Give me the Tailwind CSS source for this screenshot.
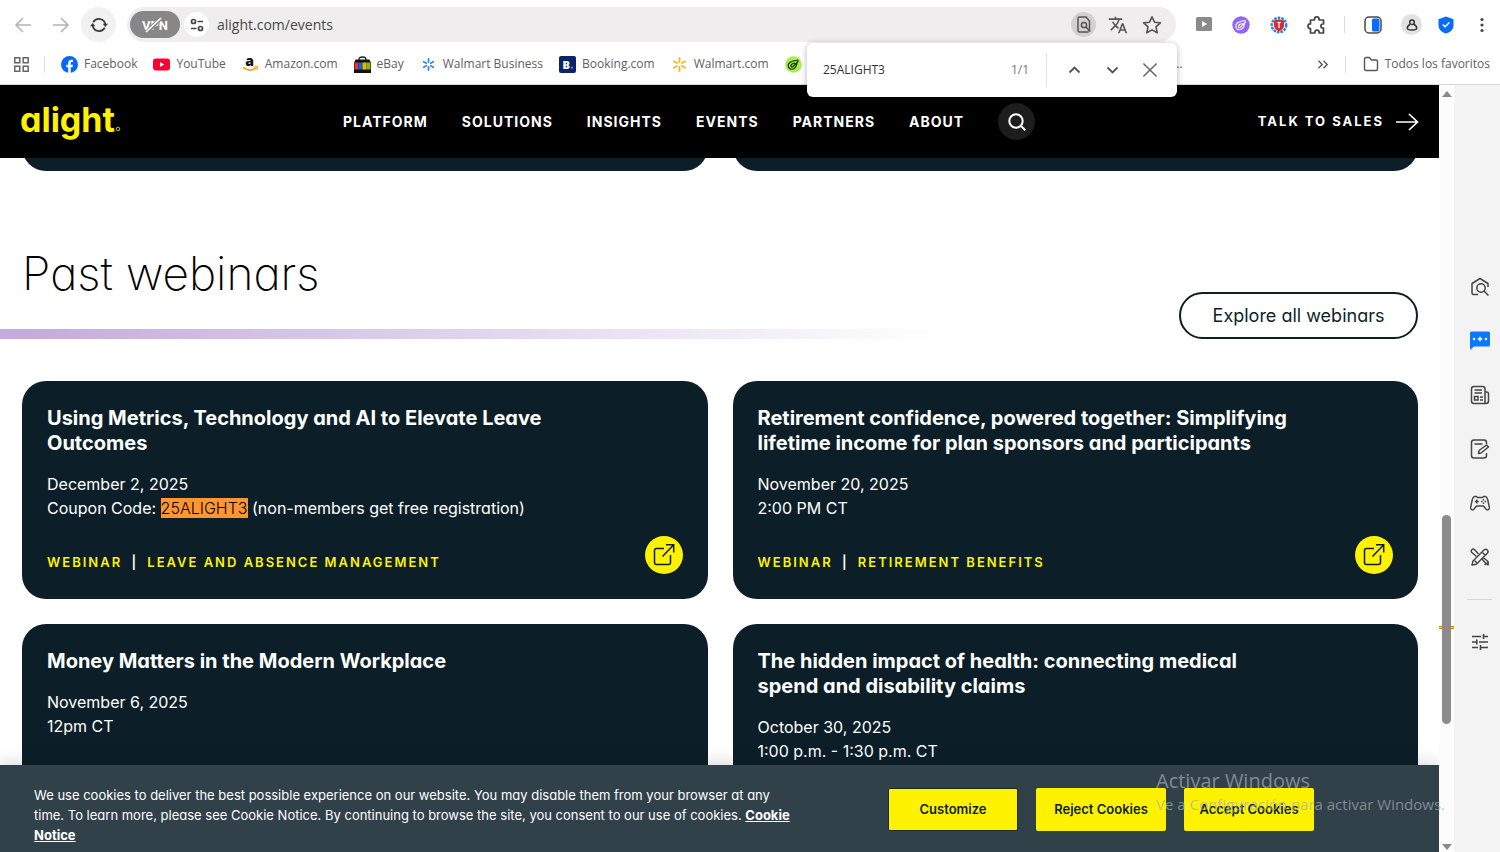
<!DOCTYPE html>
<html lang="en">
<head>
<meta charset="utf-8">
<meta name="viewport" content="width=device-width, initial-scale=1">
<title>Events | Alight</title>
<script src="https://cdn.jsdelivr.net/npm/@tailwindcss/browser@4"></script>
</head>
<body class="flex h-screen flex-col overflow-hidden bg-white font-['Open_Sans','Noto_Sans',sans-serif] text-[#5f6062]">

<!-- Browser chrome -->
<header class="relative z-30 shrink-0 border-b border-[#d9d9d9] bg-white">
  <div class="flex h-[49px] items-center">
    <div class="flex w-[127px] shrink-0 items-center pl-[14px]">
      <button aria-label="Back" class="mr-5 text-[#b4b4b4]"><svg class="size-[18px]" viewBox="0 0 18 18" fill="none" stroke="currentColor" stroke-width="1.6"><path d="M17 9H2M9 2 2 9l7 7"/></svg></button>
      <button aria-label="Forward" class="mr-[11px] text-[#b4b4b4]"><svg class="size-[18px]" viewBox="0 0 18 18" fill="none" stroke="currentColor" stroke-width="1.6"><path d="M1 9h15M9 2l7 7-7 7"/></svg></button>
      <button aria-label="Reload" class="flex size-[35px] items-center justify-center rounded-full bg-[#f1f1f1] text-[#3c3c3c]"><svg class="size-[18px]" viewBox="0 0 18 18" fill="none" stroke="currentColor" stroke-width="1.7"><path d="M3.200 6.200A6.600 6.600 0 0 1 15.400 8.500M14.800 11.800A6.600 6.600 0 0 1 2.600 9.500"/><path d="M12.600 7.800h5.400L15.300 11zM0 10.200h5.400L2.700 7z" fill="currentColor" stroke="none"/></svg></button>
    </div>
    <div class="flex h-[35px] flex-1 items-center rounded-full bg-[#efedee] pr-3 pl-[3px]">
      <button aria-label="VPN is off" class="flex h-[27px] w-[50px] items-center justify-center rounded-full bg-[#878787] text-white">
        <svg class="h-[18px] w-[28px] overflow-visible" viewBox="0 0 28 18"><text x="14" y="14" text-anchor="middle" font-family="Roboto" font-size="13" font-weight="700" fill="#fff">VPN</text><path d="M5 17 20 2" stroke="#878787" stroke-width="4"/><path d="M5 16 20 2" stroke="#fff" stroke-width="1.700"/></svg>
      </button>
      <button aria-label="Site information" class="ml-1 flex size-[25px] items-center justify-center rounded-full bg-white text-[#444]"><svg class="size-[14px]" viewBox="0 0 14 14" fill="none" stroke="currentColor" stroke-width="1.700"><circle cx="3.500" cy="3.500" r="2"/><path d="M7.500 3.500H13M1 10.500h5.500"/><circle cx="10.500" cy="10.500" r="2"/></svg></button>
      <input aria-label="Address" value="alight.com/events" class="ml-2 min-w-0 flex-1 text-sm text-[#484848] outline-none">
      <div class="flex items-center gap-[9px]">
        <button aria-label="Find in page" class="flex size-[25px] items-center justify-center rounded-full bg-[#d2d0d1] text-[#555]"><svg class="h-[17px] w-[14px]" viewBox="0 0 14 17" fill="none" stroke="currentColor" stroke-width="1.500"><path d="M12.500 15.500V5L9 1H2.500Q1 1 1 2.500v12Q1 16 2.500 16h9"/><circle cx="7" cy="9" r="2.600"/><path d="m9 11 4 4.500"/></svg></button>
        <button aria-label="Translate" class="flex size-[25px] items-center justify-center text-[#555]"><svg class="size-5" viewBox="0 0 24 24" fill="currentColor"><path d="m12.870 15.070-2.540-2.510.030-.030A17.520 17.520 0 0 0 14.070 6H17V4h-7V2H8v2H1v2h11.170C11.500 7.920 10.440 9.750 9 11.350 8.070 10.320 7.300 9.190 6.690 8h-2c.73 1.630 1.730 3.170 2.980 4.560l-5.090 5.020L4 19l5-5 3.110 3.110zM18.500 10h-2L12 22h2l1.120-3h4.750L21 22h2zm-2.620 7 1.620-4.330L19.120 17z"/></svg></button>
        <button aria-label="Bookmark this page" class="flex size-[25px] items-center justify-center text-[#555]"><svg class="size-5" viewBox="0 0 20 20" fill="none" stroke="currentColor" stroke-width="1.600" stroke-linejoin="round"><path d="m10 1.800 2.500 5.400 5.900.700-4.400 4 1.200 5.900-5.200-2.900-5.200 2.900L6 11.900l-4.400-4 5.900-.7z"/></svg></button>
      </div>
    </div>
    <div class="flex w-[324px] shrink-0 items-center pl-[19px]">
      <button aria-label="Video" class="mr-[19px]"><svg class="h-[15px] w-[18px]" viewBox="0 0 18 15"><rect x="1" width="16" height="14" rx="1.500" fill="#8b8b8b"/><path d="m7 4 5 3-5 3z" fill="#fff"/></svg></button>
      <button aria-label="Coupons" class="mr-5"><svg class="size-[18px]" viewBox="0 0 18 18" fill="none"><circle cx="9" cy="9" r="8.700" fill="#9266f5"/><path d="M14 5.500 9.500 9.800M13.500 4.500Q9 5 6 6.500 3 8.500 4 11.500t4.500 2Q12 12.500 12.500 7M10.500 7.500Q7 8 6.500 10t2 1.200L10 9.500" stroke="#fff" stroke-width="1.100"/></svg></button>
      <button aria-label="Ad shield" class="mr-[19px]"><svg class="size-[18px]" viewBox="0 0 18 18"><circle cx="9" cy="9" r="7.200" fill="none" stroke="#2c83d3" stroke-width="2.500" stroke-dasharray="2.600 1"/><path d="M9 3.200 14 4.500v5c0 3-2.500 4.700-5 6-2.500-1.300-5-3-5-6v-5z" fill="#d82b35"/><path d="M7 6.500h4M9 6.500V12" stroke="#fff" stroke-width="1.200"/></svg></button>
      <button aria-label="Extensions" class="mr-[17px] text-[#444]"><svg class="size-5" viewBox="0 0 20 20" fill="none" stroke="currentColor" stroke-width="1.700" stroke-linejoin="round"><path d="M3.500 5h4V4.200a2.300 2.300 0 0 1 4.600 0V5h4.400v4h-.6a2 2 0 0 0 0 4h.6v5h-4.400v-.700a2.100 2.100 0 0 0-4.200 0v.7H3.500v-4.500h-.2a2.300 2.300 0 0 1 0-4.600h.2z"/></svg></button>
      <span class="mr-[19px] h-[17px] w-px bg-[#dedede]"></span>
      <button aria-label="Side panel" class="mr-[19px]"><svg class="size-[18px]" viewBox="0 0 18 18"><rect x="1" y="1" width="16" height="16" rx="4" fill="#fff" stroke="#4a4a4a" stroke-width="1.500"/><rect x="8" y="2.500" width="7.500" height="13" rx="1.500" fill="#0a6cff"/></svg></button>
      <button aria-label="Profile" class="mr-4 flex size-[21px] items-center justify-center rounded-full bg-[#e2e2e2]"><svg class="size-3" viewBox="0 0 12 12" fill="none" stroke="#333" stroke-width="1.500"><circle cx="6" cy="3.200" r="2.300"/><path d="M4 5.500C2 6.500 1.300 8 1.300 9.300q0 1.700 4.700 1.700t4.700-1.700C10.700 8 10 6.500 8 5.500"/></svg></button>
      <button aria-label="Protection" class="mr-[19px]"><svg class="h-[18px] w-4" viewBox="0 0 16 18"><path d="m8 .500 7.500 2.700v6C15.500 13.500 12.500 16 8 17.500 3.500 16 .5 13.500.5 9.200v-6z" fill="#0a6cf5"/><path d="m4.800 8.500 2.300 2.300 4.300-4.300" stroke="#fff" stroke-width="1.500" fill="none"/></svg></button>
      <button aria-label="Menu"><svg class="h-4 w-[18px]" viewBox="0 0 18 16" fill="#444"><circle cx="9" cy="2.500" r="1.600"/><circle cx="9" cy="8" r="1.600"/><circle cx="9" cy="13.500" r="1.600"/></svg></button>
    </div>
  </div>

  <nav aria-label="Bookmarks" class="flex h-[35px] items-start pt-[6px] pr-[10px] pl-[14px] text-xs leading-[18px]">
    <div class="flex h-[18px] flex-1 items-center">
      <button aria-label="Apps" class="mr-[15px] text-[#666]"><svg class="size-[15px]" viewBox="0 0 15 15" fill="none" stroke="currentColor" stroke-width="1.500"><path d="M.8.8h5v5h-5zM9.200.8h5v5h-5zM.8 9.200h5v5h-5zM9.200 9.200h5v5h-5z"/></svg></button>
      <span class="mr-4 h-[17px] w-px bg-[#dedede]"></span>
      <div class="flex items-center gap-4 whitespace-nowrap">
        <a href="#" class="flex items-center gap-[6px]"><svg class="size-[17px]" viewBox="0 0 17 17"><circle cx="8.500" cy="8.500" r="8.500" fill="#0866ff"/><path d="M7.200 17v-5.800H5.300V8.700h1.900V7.400c0-2.600 1.200-3.700 3.400-3.700l1.300.1v2.300h-.9c-1 0-1.300.500-1.300 1.300v1.300h2.200l-.4 2.500H9.700V17z" fill="#fff"/></svg>Facebook</a>
        <a href="#" class="flex items-center gap-[6px]"><svg class="size-[17px]" viewBox="0 0 17 17"><rect y="2.500" width="17" height="12" rx="3" fill="#f03"/><path d="m7 6 4.200 2.500L7 11z" fill="#fff"/></svg>YouTube</a>
        <a href="#" class="flex items-center gap-[6px]"><svg class="size-[17px] overflow-visible" viewBox="0 0 17 17"><text x="7.500" y="10" text-anchor="middle" font-family="Open Sans" font-size="14" font-weight="800" fill="#111">a</text><path d="M1 11.500q7 5 13 .500" stroke="#f5a623" stroke-width="1.700" fill="none"/><path d="m12 11 3.500-.5-.6 3.500" stroke="#f5a623" stroke-width="1.200" fill="none"/></svg>Amazon.com</a>
        <a href="#" class="flex items-center gap-[6px]"><svg class="size-[17px]" viewBox="0 0 17 17"><path d="M5 5V3.500Q5 1 8.500 1T12 3.500V5" stroke="#222" stroke-width="1.300" fill="none"/><path d="M1.500 3.500h14L17 7v10H0V7z" fill="#111"/><path d="M.5 6.500h4v7h-4z" fill="#e53238"/><path d="M4.500 6.500h4v7h-4z" fill="#0a64d2"/><path d="M8.500 6.500h4v7h-4z" fill="#f5af02"/><path d="M12.500 6.500h4v7h-4z" fill="#86b817"/></svg>eBay</a>
        <a href="#" class="flex items-center gap-[6px]"><svg class="size-[17px]" viewBox="0 0 17 17" stroke="#2b8ce6" stroke-width="1.800" stroke-linecap="round"><path d="M8.500 3v3M8.500 11v3M3.700 5.700l2.600 1.500M10.700 9.800l2.600 1.500M13.300 5.700l-2.600 1.500M6.300 9.800l-2.600 1.500"/></svg>Walmart Business</a>
        <a href="#" class="flex items-center gap-[6px]"><svg class="size-[17px]" viewBox="0 0 17 17"><rect width="17" height="17" rx="2" fill="#0a2467"/><text x="3.500" y="12.500" font-family="Open Sans" font-size="11" font-weight="800" fill="#fff">B</text><circle cx="13" cy="11.700" r="1.100" fill="#29a7f5"/></svg>Booking.com</a>
        <a href="#" class="flex items-center gap-[6px]"><svg class="size-[17px]" viewBox="0 0 17 17" stroke="#fbb82d" stroke-width="1.900" stroke-linecap="round"><path d="M8.500 2v4M8.500 11v4M3 5.300l3 1.700M11 10l3 1.700M14 5.300 11 7M6 10l-3 1.700"/></svg>Walmart.com</a>
        <a href="#" aria-label="Coupons" class="flex"><svg class="size-[17px]" viewBox="0 0 17 17" fill="none"><circle cx="8.500" cy="8.500" r="8.300" fill="#a2f04a"/><path d="M13.500 5 9 9.500M13.500 4Q9 4.500 5.500 6 2.500 8 3.500 11T8 13Q11.500 12 12 6.500M10 7Q6.500 7.500 6 9.500t2 1.200L9.500 9" stroke="#1c2b12" stroke-width="1.200"/></svg></a>
      </div>
    </div>
    <div class="flex h-[18px] items-center whitespace-nowrap">
      <span class="mr-[134px]">..</span>
      <button aria-label="More bookmarks" class="mr-4"><svg class="h-[9px] w-3" viewBox="0 0 12 9" fill="none" stroke="#555" stroke-width="1.400"><path d="m1.500.8 3.700 3.700-3.700 3.700M6.500.8l3.700 3.700-3.700 3.700"/></svg></button>
      <span class="mr-[17px] h-[17px] w-px bg-[#dedede]"></span>
      <button class="flex items-center gap-[6px]"><svg class="size-4" viewBox="0 0 16 16" fill="none" stroke="#555" stroke-width="1.400" stroke-linejoin="round"><path d="M1.500 3Q1.500 1.500 3 1.500h3.300L8.500 4H13q1.500 0 1.500 1.500v7.500q0 1.500-1.500 1.500H3Q1.500 14.500 1.500 13z"/></svg>Todos los favoritos</button>
    </div>
  </nav>

  <!-- Find-in-page popup -->
  <div role="search" class="absolute top-[43px] right-[323px] flex h-[54px] w-[370px] items-center rounded-md bg-white pr-[19px] pl-4 shadow-[0_1px_6px_rgba(0,0,0,0.300)]">
    <input aria-label="Find in page" value="25ALIGHT3" class="min-w-0 flex-1 text-xs font-medium text-[#333] outline-none">
    <span class="text-xs text-[#777]">1/1</span>
    <span class="mr-[21px] ml-[17px] h-[34px] w-px bg-[#e2e2e2]"></span>
    <button aria-label="Previous match" class="mr-[25px]"><svg class="h-3 w-[13px]" viewBox="0 0 13 12" fill="none" stroke="#555" stroke-width="1.800"><path d="m1.500 8.500 5-5 5 5"/></svg></button>
    <button aria-label="Next match" class="mr-[23px]"><svg class="h-3 w-[13px]" viewBox="0 0 13 12" fill="none" stroke="#555" stroke-width="1.800"><path d="m1.500 3.500 5 5 5-5"/></svg></button>
    <button aria-label="Close find bar"><svg class="size-4" viewBox="0 0 17 17" fill="none" stroke="#666" stroke-width="1.600"><path d="m1.500 1.500 14 14m0-14-14 14"/></svg></button>
  </div>
</header>

<div class="flex min-h-0 flex-1">
  <!-- Web page -->
  <div class="relative min-w-0 flex-1 overflow-hidden bg-white font-[Inter,Lato,sans-serif] [font-feature-settings:'cv11']">
    <nav aria-label="Main" class="flex h-[73px] items-center bg-black pr-5 pl-[21px] text-sm font-bold tracking-[1px] text-white">
      <a href="#" aria-label="alight home" class="w-[322px] shrink-0 tracking-normal text-[#fff200]">
        <svg class="h-[44px] w-[100px] overflow-visible" viewBox="0 0 100 44"><text x="-1" y="32" font-family="Inter" font-size="34" font-weight="700" fill="#fff200">alight</text><circle cx="97" cy="29" r="1.800" fill="none" stroke="#fff200" stroke-width="0.800"/></svg>
      </a>
      <div class="flex flex-1 items-center gap-[34px]">
        <a href="#">PLATFORM</a><a href="#">SOLUTIONS</a><a href="#">INSIGHTS</a><a href="#">EVENTS</a><a href="#">PARTNERS</a><a href="#">ABOUT</a>
        <button aria-label="Search" class="flex size-[37px] items-center justify-center rounded-full bg-[#1d1d1d]"><svg class="size-[18px]" viewBox="0 0 18 18" fill="none" stroke="#fff" stroke-width="2"><circle cx="8" cy="8" r="6.700"/><path d="m12.800 12.800 4.400 4.400"/></svg></button>
      </div>
      <a href="#" class="flex items-center gap-[11px] text-[13px] tracking-[2px]">TALK TO SALES<svg class="h-[18px] w-6" viewBox="0 0 24 18" fill="none" stroke="#fff" stroke-width="1.700"><path d="M1 9h21.500M14 1l8.500 8-8.500 8"/></svg></a>
    </nav>

    <div class="grid h-[13px] grid-cols-2 content-end gap-[25px] overflow-hidden pr-[21px] pl-[22px]">
      <div class="h-12 rounded-3xl bg-[#0c1f28]"></div>
      <div class="h-12 rounded-3xl bg-[#0c1f28]"></div>
    </div>

    <main>
      <div class="mb-[42px] flex items-end pt-[72px]">
        <div class="flex-1">
          <h1 class="mb-[26px] pl-[22px] text-[46px] leading-[60px] font-extralight text-black">Past webinars</h1>
          <div class="h-[10px] w-4/5 bg-linear-to-r from-[#c4a9dc] to-white"></div>
        </div>
        <a href="#" class="mr-[21px] flex h-[47px] w-[239px] items-center justify-center rounded-full border-2 border-[#0c1f28] text-lg font-normal text-[#0c1f28]">Explore all webinars</a>
      </div>

      <div class="grid grid-cols-2 gap-[25px] pr-[21px] pl-[22px] text-base leading-6 text-white">
        <article class="flex flex-col rounded-3xl bg-[#0c1f28] p-[25px]">
          <h2 class="max-w-[540px] text-xl leading-[25px] font-bold">Using Metrics, Technology and AI to Elevate Leave Outcomes</h2>
          <p class="mt-4">December 2, 2025<br>Coupon Code: <mark class="bg-[#ff9632] font-light text-black">25ALIGHT3</mark> (non-members get free registration)</p>
          <div class="mt-4 flex items-end justify-between">
            <p class="text-[13px] leading-6 font-semibold tracking-[2px] text-[#fff200]">WEBINAR <span class="mx-1 text-white">|</span> LEAVE AND ABSENCE MANAGEMENT</p>
            <a href="#" aria-label="Open webinar" class="flex size-[38px] items-center justify-center rounded-full bg-[#fff200]"><svg class="size-6" viewBox="0 0 24 24" fill="none" stroke="#0c1f28" stroke-width="1.500"><path d="M12 5.500H4.500Q2.500 5.500 2.500 7.500v12q0 2 2 2h12q2 0 2-2V12M10.500 13.500 21.500 2M14 1.800h7.700v7.700"/></svg></a>
          </div>
        </article>
        <article class="flex flex-col rounded-3xl bg-[#0c1f28] p-[25px]">
          <h2 class="max-w-[540px] text-xl leading-[25px] font-bold">Retirement confidence, powered together: Simplifying lifetime income for plan sponsors and participants</h2>
          <p class="mt-4">November 20, 2025<br>2:00 PM CT</p>
          <div class="mt-4 flex items-end justify-between">
            <p class="text-[13px] leading-6 font-semibold tracking-[2px] text-[#fff200]">WEBINAR <span class="mx-1 text-white">|</span> RETIREMENT BENEFITS</p>
            <a href="#" aria-label="Open webinar" class="flex size-[38px] items-center justify-center rounded-full bg-[#fff200]"><svg class="size-6" viewBox="0 0 24 24" fill="none" stroke="#0c1f28" stroke-width="1.500"><path d="M12 5.500H4.500Q2.500 5.500 2.500 7.500v12q0 2 2 2h12q2 0 2-2V12M10.500 13.500 21.500 2M14 1.800h7.700v7.700"/></svg></a>
          </div>
        </article>
        <article class="flex min-h-[218px] flex-col rounded-3xl bg-[#0c1f28] p-[25px]">
          <h2 class="max-w-[540px] text-xl leading-[25px] font-bold">Money Matters in the Modern Workplace</h2>
          <p class="mt-4">November 6, 2025<br>12pm CT</p>
        </article>
        <article class="flex min-h-[218px] flex-col rounded-3xl bg-[#0c1f28] p-[25px]">
          <h2 class="max-w-[540px] text-xl leading-[25px] font-bold">The hidden impact of health: connecting medical spend and disability claims</h2>
          <p class="mt-4">October 30, 2025<br>1:00 p.m. - 1:30 p.m. CT</p>
        </article>
      </div>
    </main>

    <!-- Cookie banner fixed over the page -->
    <section aria-label="Cookie consent" class="absolute inset-x-0 bottom-0 flex h-[87px] items-start bg-[#31414a] pl-[34px] shadow-[0_0_18px_rgba(0,0,0,0.200)]">
      <p class="w-[762px] shrink-0 pt-5 text-[13px] leading-5 font-normal text-white">We use cookies to deliver the best possible experience on our website. You may disable them from your browser at any time. To learn more, please see Cookie Notice. By continuing to browse the site, you consent to our use of cookies. <a href="#" class="font-bold underline">Cookie Notice</a></p>
      <div class="ml-[92px] flex gap-[18px] pt-[23px] text-[13px] font-semibold text-[#0c1f28]">
        <button class="h-[43px] w-[130px] rounded-xs border border-[#1d2b22] bg-[#fff200]">Customize</button>
        <button class="h-[43px] w-[130px] rounded-xs bg-[#fff200]">Reject Cookies</button>
        <button class="h-[43px] w-[130px] rounded-xs bg-[#fff200]">Accept Cookies</button>
      </div>
    </section>
  </div>

  <!-- Scrollbar -->
  <div class="relative flex w-[15px] shrink-0 flex-col items-center justify-between bg-[#fcfcfc] pt-[6px] pb-[2px]">
    <svg class="h-[6px] w-[10px]" viewBox="0 0 10 6"><path d="m0 6 5-6 5 6z" fill="#8b8b8b"/></svg>
    <div class="absolute top-[70%] mt-1 h-[3px] w-full border-y border-[#c98c00] bg-[#ffc933]"></div>
    <div class="absolute top-[56%] h-[209px] w-[9px] rounded-full bg-[#8b8b8b]"></div>
    <svg class="h-[6px] w-[10px]" viewBox="0 0 10 6"><path d="m0 0 5 6 5-6z" fill="#8b8b8b"/></svg>
  </div>

  <!-- Browser side panel -->
  <aside class="flex w-[46px] shrink-0 flex-col items-center gap-[34px] bg-[#f3f3f3] pt-[192px] pl-[5px] text-[#444]">
    <button aria-label="Visual search"><svg class="size-5" viewBox="0 0 20 20" fill="none" stroke="currentColor" stroke-width="1.500" stroke-linejoin="round"><path d="M8 17.500H3.500Q2 17.500 2 16V6.500l8-5 8 5V10"/><circle cx="11" cy="11" r="4.200"/><path d="m14 14 4.500 4.500"/></svg></button>
    <button aria-label="Chat"><svg class="size-5" viewBox="0 0 20 20"><path d="M1.500.5h17q1.500 0 1.500 1.500v12q0 1.500-1.500 1.500H4L0 19V2Q0 .5 1.500.5z" fill="#0a78fa"/><circle cx="4" cy="8" r="1.200" fill="#fff"/><circle cx="16" cy="8" r="1.200" fill="#fff"/><path d="m10 5 .9 2.100L13 8l-2.100.9L10 11l-.9-2.100L7 8l2.100-.9z" fill="#fff"/></svg></button>
    <button aria-label="News"><svg class="size-5" viewBox="0 0 20 20" fill="none" stroke="currentColor" stroke-width="1.500"><path d="M15 18.500H4Q1.500 18.500 1.500 16V4Q1.500 1.500 4 1.500h8.500Q15 1.500 15 4zM15 7h1.500q2 0 2 2v7q0 2.500-2.500 2.500h-1.500M4.500 5h7.500M4.500 8h7.500M4.500 11.500H8V15H4.500zM10 12h3M10 15h3"/></svg></button>
    <button aria-label="Notes"><svg class="size-5" viewBox="0 0 20 20" fill="none" stroke="currentColor" stroke-width="1.500" stroke-linejoin="round"><path d="M16.500 5V3.500q0-2.500-2.500-2.500H4Q1.500 1 1.500 3.500v13Q1.500 19 4 19h10q2.500 0 2.500-2.500V14M4.500 5h8M8.500 14.500l.5-3 7.500-5.500 2 2-7.500 6z"/></svg></button>
    <button aria-label="Games"><svg class="size-5" viewBox="0 0 20 20" fill="none" stroke="currentColor" stroke-width="1.400" stroke-linejoin="round"><path d="M4.500 3.500h2l1 1h5l1-1h2q1.500.5 2.200 3L19.300 14q.2 3-1.800 3-1 0-2-1.500L13.500 13h-7l-2 2.500Q3.500 17 2.500 17 .5 17 .7 14l1.600-7.500q.7-2.500 2.200-3z"/><path d="M6.800 6.500v4M4.800 8.500h4"/><path d="M13.500 6v1.500M13.500 9.500V11M11 8.500h1.500M14.700 8.500h1.500"/></svg></button>
    <button aria-label="Tools"><svg class="size-5" viewBox="0 0 20 20" fill="none" stroke="currentColor" stroke-width="1.400" stroke-linejoin="round"><path d="m8.500 7-4-4.500q-1.500-1-2.700.2t-.2 2.600L6.500 9.500M11.500 11.500l4 4.500 2.500 2q.700-2.500-.5-4L13 10.500"/><path d="m2 18 1-4L14 3q1.700-1.500 3.300 0t0 3.300L6.300 17.200zM12 5l3 3M4 13l3 3M14.500 18l4-3"/></svg></button>
    <hr class="-mt-[2px] w-[25px] border-[#d9d9d9]">
    <button aria-label="Settings"><svg class="size-4" viewBox="0 0 16 16" fill="none" stroke="currentColor" stroke-width="1.600"><path d="M0 2.500h9M12 2.500h4M11.500 0v5M0 8h4M7 8h9M4.800 5.500v5M0 13.500h6M9 13.500h7M8.500 11v5"/></svg></button>
  </aside>
</div>

<!-- Windows activation watermark -->
<div class="pointer-events-none absolute right-[58px] bottom-[37px] z-40 w-[286px] whitespace-nowrap text-[#a5adb2]/70">
  <p class="text-xl leading-6">Activar Windows</p>
  <p class="text-[15px] leading-[22px]">Ve a Configuración para activar Windows.</p>
</div>
</body>
</html>
